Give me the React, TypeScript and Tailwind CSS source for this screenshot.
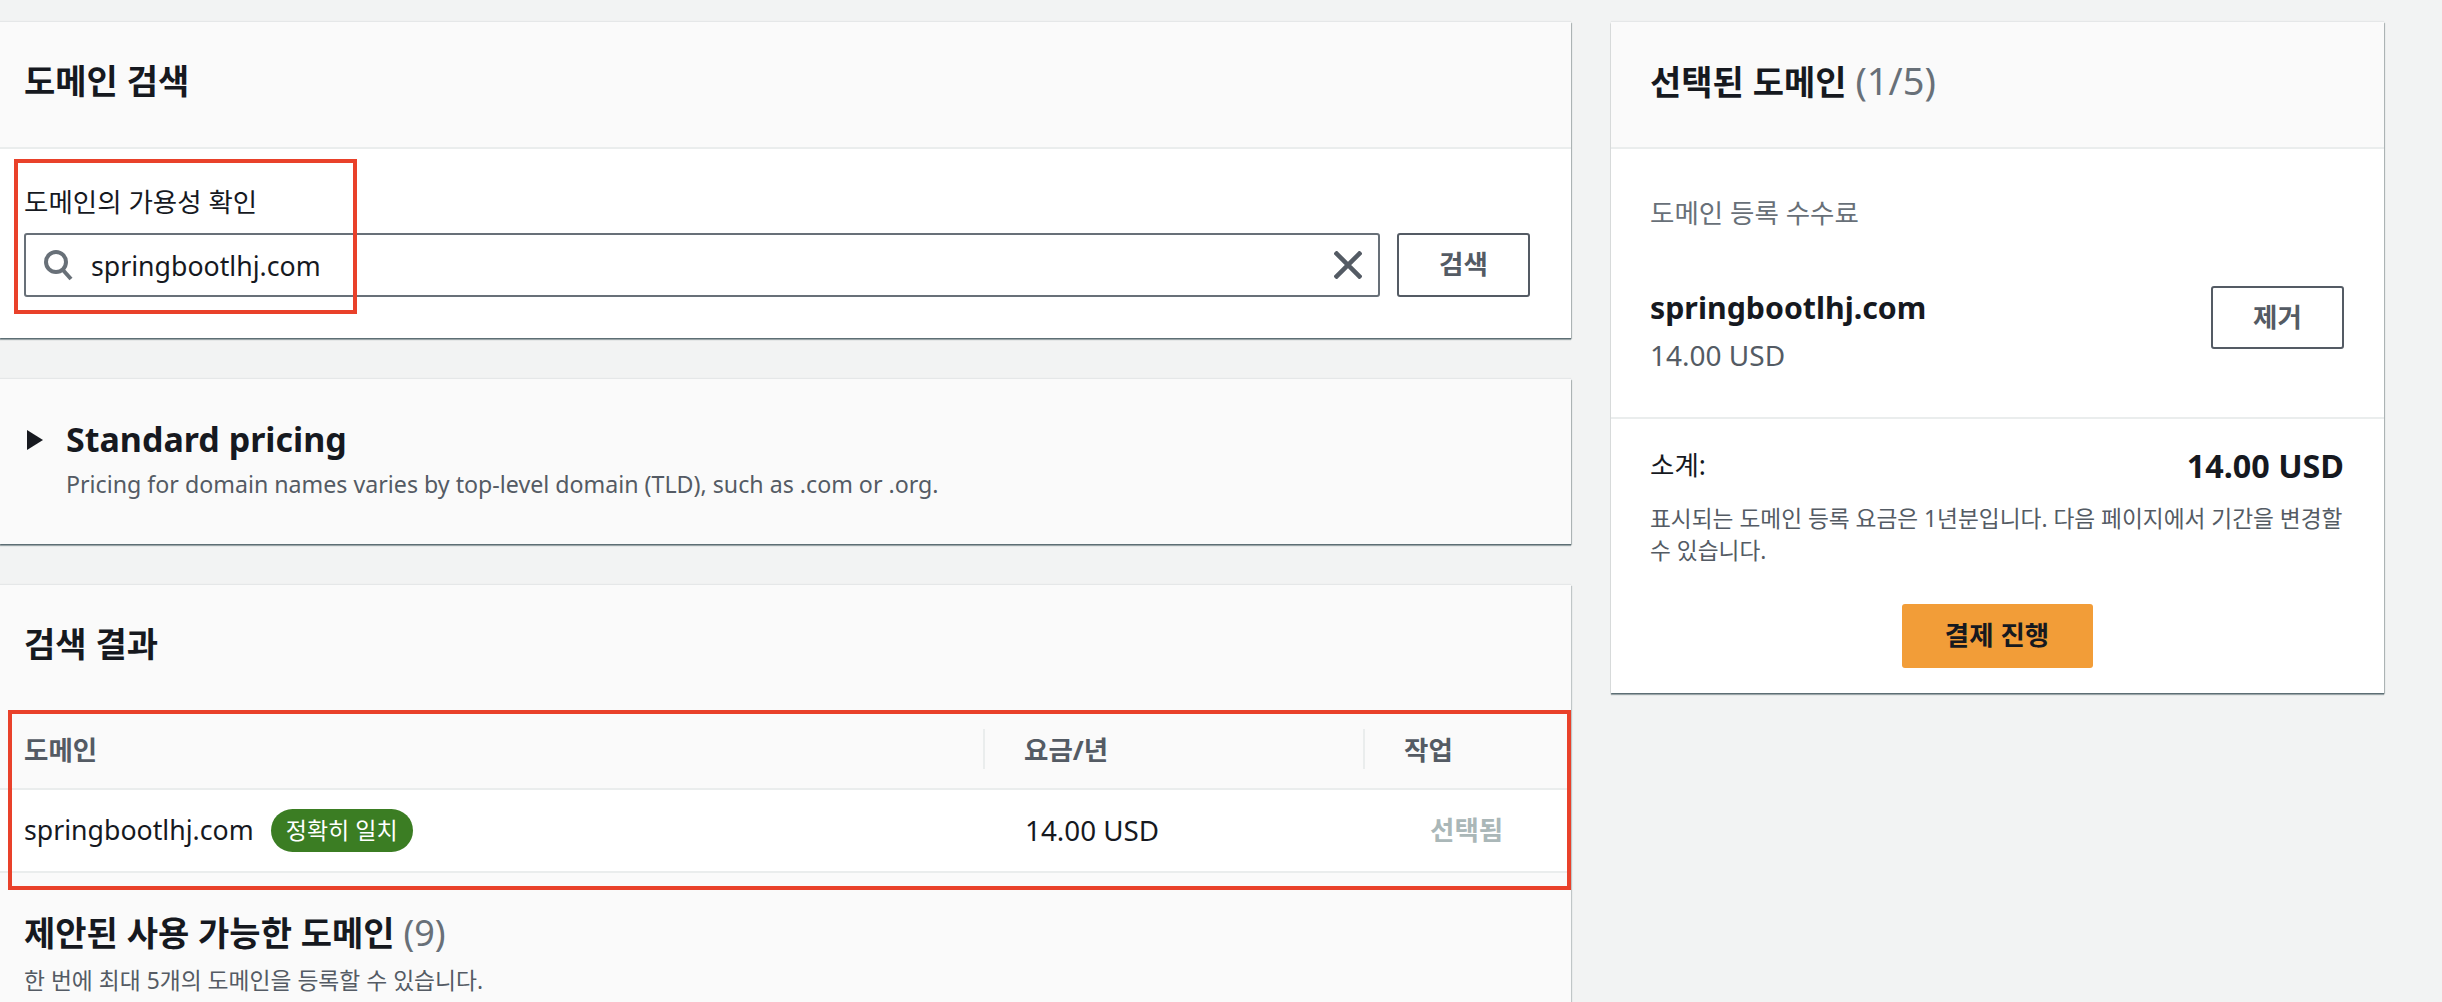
const fontStack = "font-['Noto_Sans','Noto_Sans_CJK_KR',sans-serif]";
const cardShadow = "shadow-[0_1px_1px_0_rgba(0,28,36,0.3),0_2px_1px_0_rgba(0,28,36,0.3),1px_1px_1px_0_rgba(0,28,36,0.2),0_-1px_1px_0_rgba(0,28,36,0.05)]";

function RedBox({ className }: { className: string }) {
  return <div className={`pointer-events-none absolute border-4 border-[#e9412a] ${className}`} />;
}

function SearchCard() {
  return (
    <section className={`relative bg-white ${cardShadow}`}>
      <div className="flex h-[127px] items-center border-b-2 border-[#eaeded] bg-[#fafafa] px-6 pb-[8px]">
        <h2 className="text-[34px] font-bold leading-[42px] text-[#16191f]">도메인 검색</h2>
      </div>
      <div className="px-6 pb-[41px] pt-[34px]">
        <label className="block text-[26.5px] leading-[38px] text-[#16191f]">도메인의 가용성 확인</label>
        <div className="mt-[12px] flex gap-[17px]">
          <div className="flex h-[64px] w-[1356px] items-center rounded-[3px] border-2 border-[#687078] pl-[16px] pr-[16px]">
            <svg width="32" height="32" viewBox="0 0 32 32" fill="none" stroke="#687078" strokeWidth="4" className="shrink-0">
              <circle cx="14" cy="13" r="10" />
              <path d="M20.5 20.5 29 30" />
            </svg>
            <span className="ml-[17px] flex-1 pt-[3px] text-[26.7px] leading-none text-[#16191f]">springbootlhj.com</span>
            <svg width="28" height="28" viewBox="0 0 28 28" fill="none" stroke="#545b64" strokeWidth="4.5">
              <path d="M1 1 27 27M27 1 1 27" />
            </svg>
          </div>
          <button className="h-[64px] w-[133px] rounded-[3px] border-2 border-[#545b64] text-[26.5px] font-bold text-[#545b64]">
            검색
          </button>
        </div>
      </div>
      <RedBox className="left-[14px] top-[137px] h-[155px] w-[343px]" />
    </section>
  );
}

function PricingCard() {
  return (
    <section className={`mt-[41px] flex h-[165px] bg-[#fafafa] pl-[26px] pt-[36px] ${cardShadow}`}>
      <svg width="18" height="20" viewBox="0 0 18 20" className="mt-[15px] shrink-0">
        <path d="M1 0 17 10 1 20Z" fill="#16191f" />
      </svg>
      <div className="ml-[22px]">
        <h2 className="text-[34px] font-bold leading-[48px] text-[#16191f]">Standard pricing</h2>
        <p className="mt-[4px] text-[23.2px] leading-[34px] text-[#545b64]">
          Pricing for domain names varies by top-level domain (TLD), such as .com or .org.
        </p>
      </div>
    </section>
  );
}

function ResultsCard() {
  return (
    <section className="relative mt-[41px] h-[500px] bg-[#fafafa] shadow-[1px_1px_1px_0_rgba(0,28,36,0.2),0_-1px_1px_0_rgba(0,28,36,0.05)]">
      <div className="flex h-[125px] items-center px-6 pb-[7px]">
        <h2 className="text-[34px] font-bold leading-[42px] text-[#16191f]">검색 결과</h2>
      </div>
      <div className="flex h-[80px] items-center border-b-2 border-[#eaeded] text-[26.5px] font-bold text-[#545b64]">
        <div className="w-[983px] pl-6 pt-[4px]">도메인</div>
        <div className="flex h-[40px] w-[380px] items-center border-l-2 border-[#eaeded] pl-[39px]">
          <span className="pt-[4px]">요금/년</span>
        </div>
        <div className="flex h-[40px] flex-1 items-center border-l-2 border-[#eaeded] pl-[39px]">
          <span className="pt-[4px]">작업</span>
        </div>
      </div>
      <div className="flex h-[83px] items-center border-b-2 border-[#eaeded] bg-white text-[#16191f]">
        <div className="flex w-[983px] items-center pl-6">
          <span className="text-[26.7px]">springbootlhj.com</span>
          <span className="ml-[17px] flex h-[43px] w-[142px] items-center justify-center rounded-full bg-[#3b7d23] text-[23px] text-white">
            정확히 일치
          </span>
        </div>
        <div className="w-[380px] pl-[42px] text-[27.8px]">14.00 USD</div>
        <div className="pl-[67px] text-[26.5px] font-bold text-[#aab7b8]">선택됨</div>
      </div>
      <div className="px-6 pt-[39px]">
        <h2 className="text-[34px] font-bold leading-[42px] text-[#16191f]">
          제안된 사용 가능한 도메인 <span className="text-[36px] font-normal text-[#687078]">(9)</span>
        </h2>
        <p className="mt-[10px] text-[22.8px] leading-[34px] text-[#545b64]">
          한 번에 최대 5개의 도메인을 등록할 수 있습니다.
        </p>
      </div>
      <RedBox className="left-[8px] top-[125px] h-[180px] w-[1563px]" />
    </section>
  );
}

function SelectedCard() {
  return (
    <aside className={`h-[671px] w-[773px] shrink-0 bg-white ${cardShadow}`}>
      <div className="flex h-[127px] items-center border-b-2 border-[#eaeded] bg-[#fafafa] px-[39px] pb-[8px]">
        <h2 className="text-[34px] font-bold leading-[42px] text-[#16191f]">
          선택된 도메인 <span className="text-[38px] font-normal leading-[42px] text-[#687078]">(1/5)</span>
        </h2>
      </div>
      <div className="h-[270px] border-b-2 border-[#eaeded] pl-[39px] pr-[40px] pt-[45px]">
        <p className="text-[26.5px] leading-[38px] text-[#687078]">도메인 등록 수수료</p>
        <div className="mt-[54px] flex items-start justify-between">
          <div>
            <p className="text-[30.3px] font-bold leading-[44px] text-[#16191f]">springbootlhj.com</p>
            <p className="mt-[3px] text-[28px] leading-[44px] text-[#545b64]">14.00 USD</p>
          </div>
          <button className="h-[63px] w-[133px] rounded-[3px] border-2 border-[#545b64] text-[26.5px] font-bold text-[#545b64]">
            제거
          </button>
        </div>
      </div>
      <div className="pl-[39px] pr-[40px] pt-[26px]">
        <div className="flex items-center justify-between text-[#16191f]">
          <span className="text-[26.5px] leading-[40px]">소계:</span>
          <span className="text-[32.3px] font-bold leading-[40px]">14.00 USD</span>
        </div>
        <p className="mt-[18px] text-[22.7px] leading-[32px] text-[#545b64]">
          표시되는 도메인 등록 요금은 1년분입니다. 다음 페이지에서 기간을 변경할 수 있습니다.
        </p>
        <div className="mt-[37px] flex justify-center">
          <button className="h-[64px] w-[191px] rounded-[3px] bg-[#f29d38] text-[26.5px] font-bold text-[#16191f]">
            결제 진행
          </button>
        </div>
      </div>
    </aside>
  );
}

export default function App() {
  return (
    <div className={`flex h-[1002px] items-start gap-[40px] overflow-hidden bg-[#f2f3f3] pt-[22px] ${fontStack}`}>
      <main className="w-[1571px] shrink-0">
        <SearchCard />
        <PricingCard />
        <ResultsCard />
      </main>
      <SelectedCard />
    </div>
  );
}
